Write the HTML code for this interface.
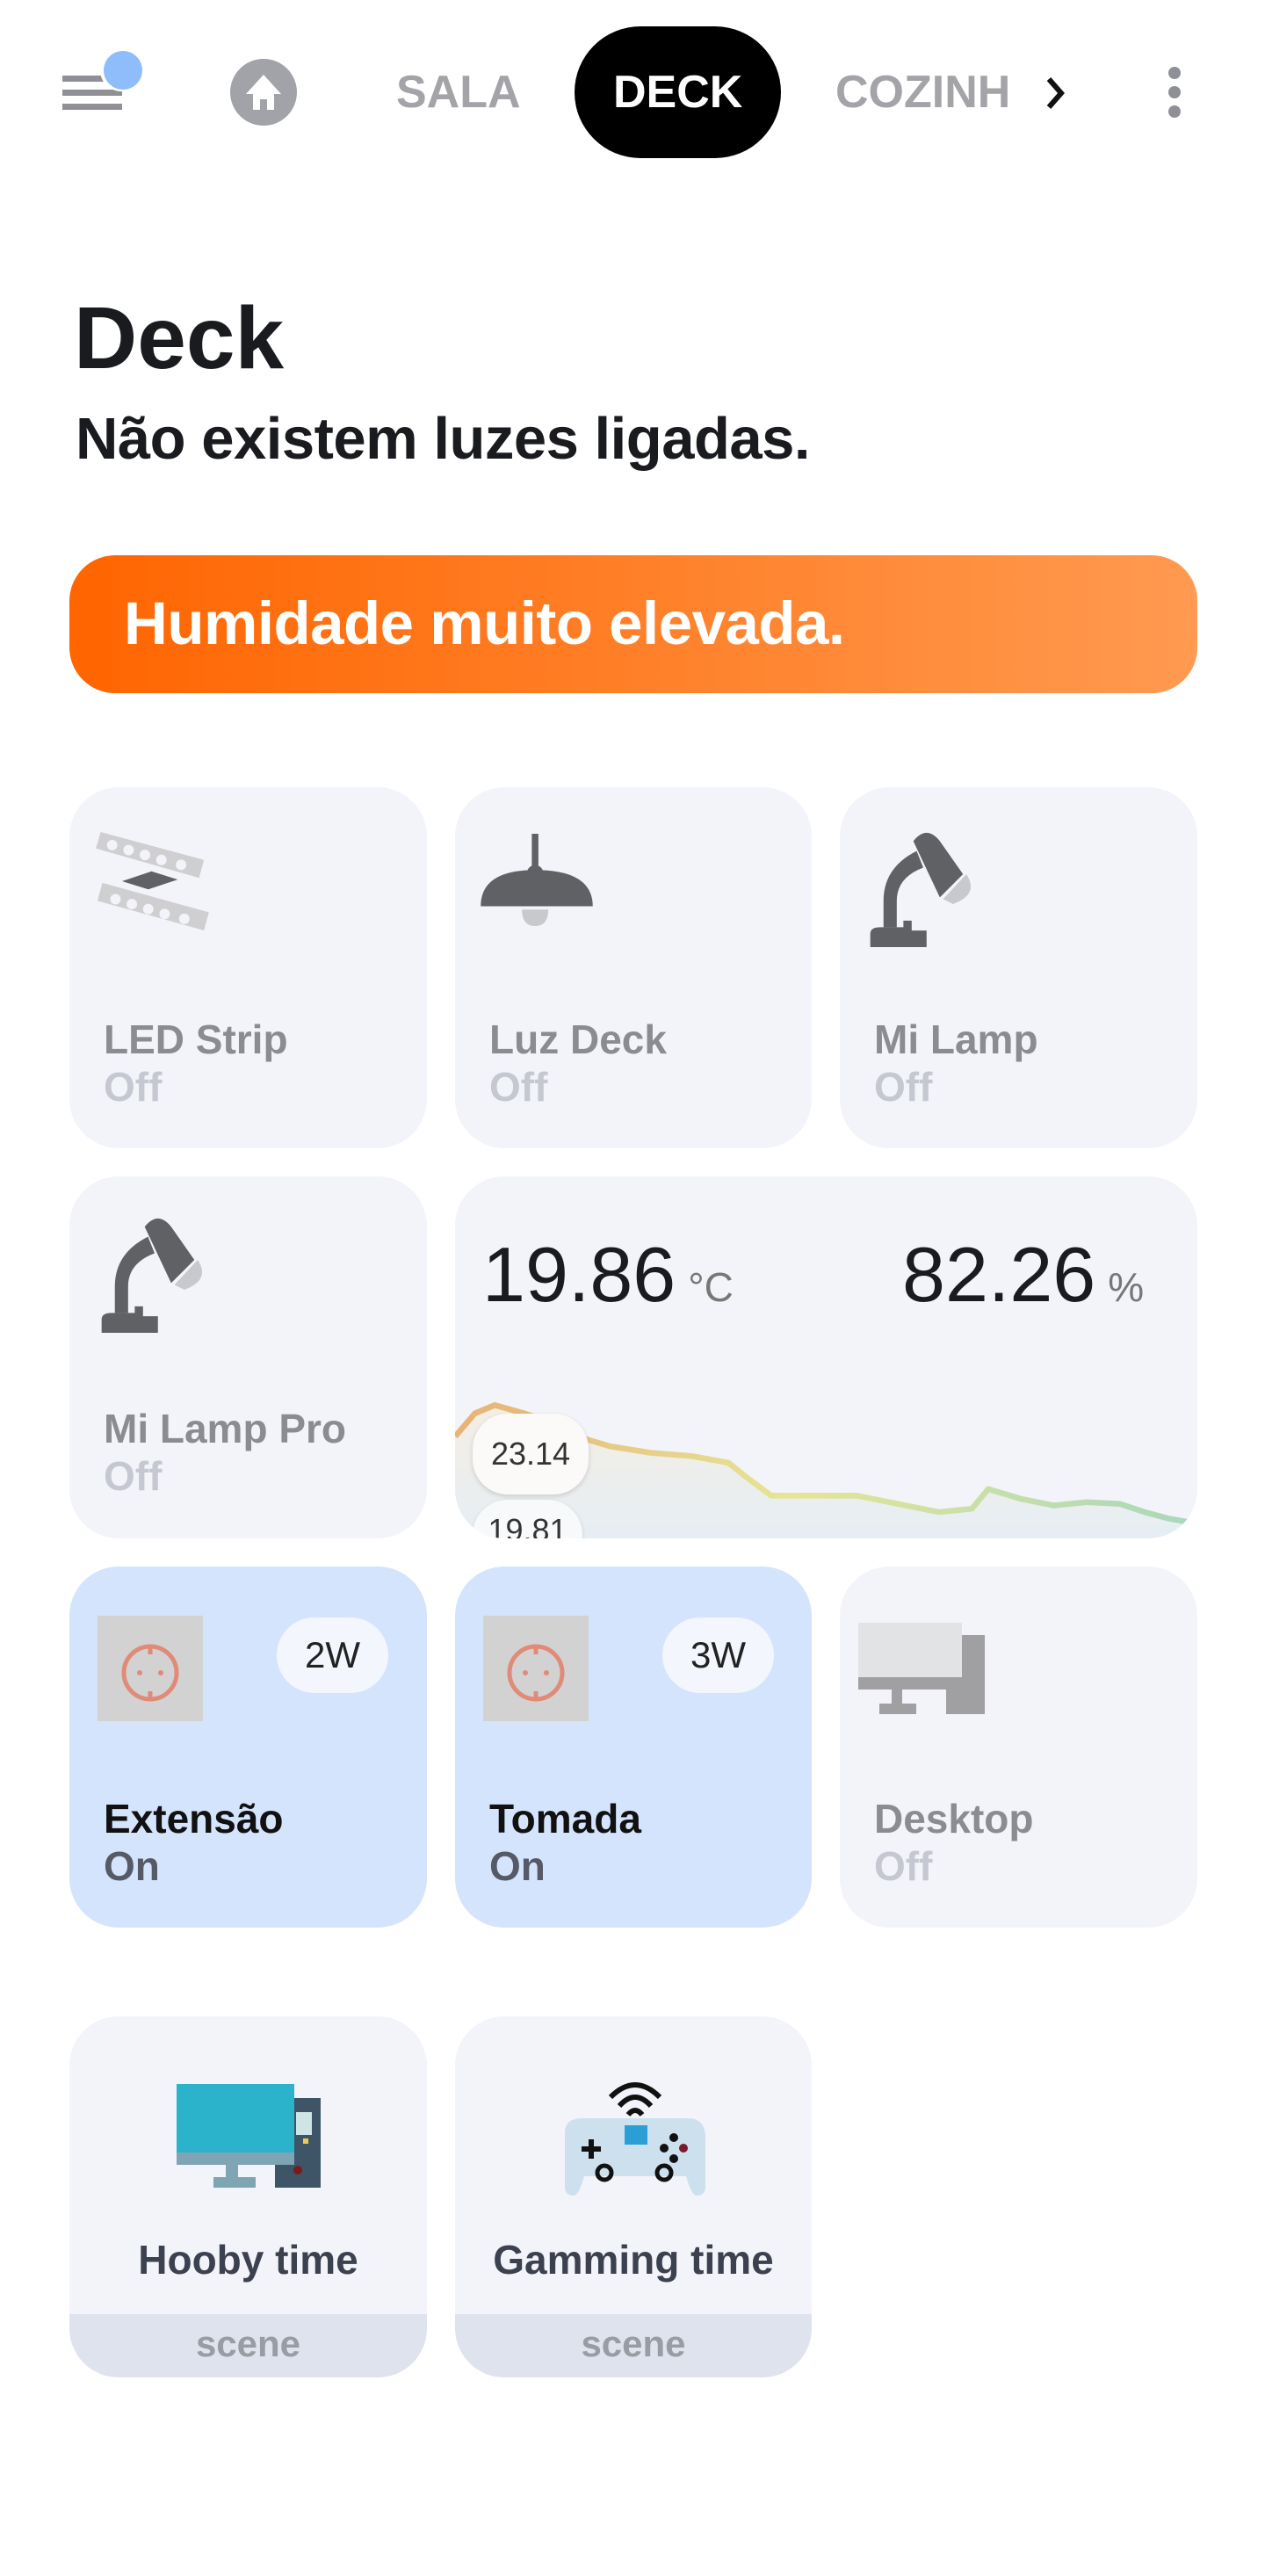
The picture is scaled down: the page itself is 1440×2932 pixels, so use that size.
<!DOCTYPE html>
<html><head><meta charset="utf-8">
<style>
*{margin:0;padding:0;box-sizing:border-box}
body{width:1440px;height:2932px;background:#fff;font-family:"Liberation Sans",sans-serif;position:relative;overflow:hidden}
.a{position:absolute}
.tab{position:absolute;top:74px;font-size:52px;font-weight:bold;color:#a3a3a8;line-height:62px}
.card{position:absolute;background:#f3f4f9;border-radius:56px;overflow:hidden}
.on{background:#d4e4fc}
.name{position:absolute;left:39px;top:260px;font-size:46px;font-weight:bold;color:#8a8c92;white-space:nowrap}
.st{position:absolute;left:39px;top:314px;font-size:46px;font-weight:bold;color:#c5c8d0}
.on .name{color:#111}
.on .st{color:#555a66}
.badge{position:absolute;left:236px;top:58px;width:127px;height:86px;border-radius:43px;background:#f3f6fc;font-size:42px;color:#222;text-align:center;line-height:86px}
.sock{position:absolute;left:32px;top:56px;width:120px;height:120px;background:#d2d2d2}
.sname{position:absolute;left:0;width:100%;top:250px;text-align:center;font-size:46px;font-weight:bold;color:#3c4150}
.sbar{position:absolute;left:0;width:100%;bottom:0;height:72px;background:#dfe3ee;text-align:center;font-size:42px;font-weight:bold;color:#9a9ca4;line-height:68px}
</style></head><body>

<div class="a" style="left:71px;top:86px;width:50px;height:7px;background:#8e9096"></div>
<div class="a" style="left:71px;top:102px;width:68px;height:7px;background:#8e9096"></div>
<div class="a" style="left:71px;top:118px;width:68px;height:7px;background:#8e9096"></div>
<div class="a" style="left:114px;top:56px;width:48px;height:48px;border-radius:50%;background:#fff"></div>
<div class="a" style="left:118px;top:58px;width:44px;height:44px;border-radius:50%;background:#8fbcfb"></div>
<svg class="a" style="left:262px;top:67px" width="76" height="76" viewBox="0 0 76 76"><circle cx="38" cy="38" r="38" fill="#a2a3a8"/><path d="M38 18 L58 40 H50 V58 H42 V46 H34 V58 H26 V40 H18 Z" fill="#fff"/></svg>
<div class="tab" style="left:451px">SALA</div>
<div class="a" style="left:654px;top:30px;width:235px;height:150px;border-radius:75px;background:#000"></div>
<div class="tab" style="left:698px;color:#fff">DECK</div>
<div class="tab" style="left:951px">COZINH</div>
<svg class="a" style="left:1188px;top:86px" width="28" height="40" viewBox="0 0 28 40"><path d="M6 4 L20 20 L6 36" stroke="#111" stroke-width="6" fill="none"/></svg>
<div class="a" style="left:1330px;top:76px;width:14px;height:14px;border-radius:50%;background:#8e9096"></div>
<div class="a" style="left:1330px;top:98px;width:14px;height:14px;border-radius:50%;background:#8e9096"></div>
<div class="a" style="left:1330px;top:120px;width:14px;height:14px;border-radius:50%;background:#8e9096"></div>

<div class="a" style="left:84px;top:330px;font-size:100px;font-weight:bold;color:#1a1b1f;line-height:110px">Deck</div>
<div class="a" style="left:86px;top:462px;font-size:67px;font-weight:bold;color:#1a1b1f;line-height:76px;letter-spacing:-0.5px">Não existem luzes ligadas.</div>

<div class="a" style="left:79px;top:632px;width:1284px;height:157px;border-radius:52px;background:linear-gradient(90deg,#ff6500,#ff9a50)"></div>
<div class="a" style="left:141px;top:670px;font-size:69px;font-weight:bold;color:#fff;line-height:80px;letter-spacing:-0.5px">Humidade muito elevada.</div>

<div class="card" style="left:79px;top:896px;width:407px;height:411px">
 <svg class="a" style="left:26px;top:51px" width="135" height="125" viewBox="0 0 72 67"><g fill="#cfcfd1"><path d="M2 10 L5 0 L68 17 L65 28 Z"/><path d="M3 42 L6 31 L71 49 L68 60 Z"/></g><g fill="#f3f4f9"><circle cx="12" cy="8" r="3.2"/><circle cx="22" cy="11" r="3.2"/><circle cx="32" cy="14" r="3.2"/><circle cx="42" cy="17" r="3.2"/><circle cx="54" cy="20" r="3.2"/><circle cx="14" cy="41" r="3.2"/><circle cx="24" cy="44" r="3.2"/><circle cx="34" cy="47" r="3.2"/><circle cx="44" cy="50" r="3.2"/><circle cx="56" cy="53" r="3.2"/></g><path d="M18 30 L36 24 L52 29 L34 35 Z" fill="#5f6165"/></svg>
 <div class="name">LED Strip</div><div class="st">Off</div></div>
<div class="card" style="left:518px;top:896px;width:406px;height:411px">
 <svg class="a" style="left:29px;top:53px" width="128" height="120" viewBox="0 0 68 64"><rect x="31" y="0" width="4" height="22" fill="#5f6165"/><circle cx="33" cy="24" r="5" fill="#5f6165"/><path d="M0 44 Q0 22 33 22 Q68 22 68 44 Z" fill="#5f6165"/><path d="M25 46 H41 Q41 56 33 56 Q25 56 25 46Z" fill="#c8c9cc"/></svg>
 <div class="name">Luz Deck</div><div class="st">Off</div></div>
<div class="card" style="left:956px;top:896px;width:407px;height:411px">
 <svg class="a" style="left:30px;top:50px" width="130" height="132" viewBox="0 0 68 70"><path d="M28 6 Q36 -4 44 6 L58 26 L44 40 Z" fill="#5f6165"/><path d="M60 26 Q68 38 52 44 L46 41Z" fill="#c8c9cc"/><path d="M30 12 Q10 22 10 42 L10 58 L18 58 L18 42 Q18 28 34 22 Z" fill="#5f6165"/><path d="M2 70 L2 62 Q2 58 8 58 L22 58 L22 54 L27 54 L27 60 L36 60 L36 70 Z" fill="#5f6165"/></svg>
 <div class="name">Mi Lamp</div><div class="st">Off</div></div>

<div class="card" style="left:79px;top:1339px;width:407px;height:412px">
 <svg class="a" style="left:32px;top:46px" width="130" height="132" viewBox="0 0 68 70"><path d="M28 6 Q36 -4 44 6 L58 26 L44 40 Z" fill="#5f6165"/><path d="M60 26 Q68 38 52 44 L46 41Z" fill="#c8c9cc"/><path d="M30 12 Q10 22 10 42 L10 58 L18 58 L18 42 Q18 28 34 22 Z" fill="#5f6165"/><path d="M2 70 L2 62 Q2 58 8 58 L22 58 L22 54 L27 54 L27 60 L36 60 L36 70 Z" fill="#5f6165"/></svg>
 <div class="name">Mi Lamp Pro</div><div class="st">Off</div></div>
<div class="card" style="left:518px;top:1339px;width:845px;height:412px">
 <div class="a" style="left:31px;top:62px;font-size:88px;color:#1a1b1f;line-height:100px;white-space:nowrap">19.86<span style="font-size:46px;color:#777;margin-left:14px">°C</span></div>
 <div class="a" style="left:509px;top:62px;font-size:88px;color:#1a1b1f;line-height:100px;white-space:nowrap">82.26<span style="font-size:46px;color:#777;margin-left:14px">%</span></div>
 <svg class="a" style="left:0;top:0" width="845" height="412" viewBox="276 714 451 220">
  <defs><linearGradient id="g" x1="0" x2="1"><stop offset="0" stop-color="#e8b274"/><stop offset="0.45" stop-color="#e6e596"/><stop offset="1" stop-color="#a8d8bc"/></linearGradient>
  <linearGradient id="f" x1="0" x2="0" y1="0" y2="1"><stop offset="0" stop-color="#f4eee4"/><stop offset="1" stop-color="#e6eef4"/></linearGradient></defs>
  <path d="M276 872 L288 858 L300 853 L318 858 L330 862 L350 872 L370 878 L395 882 L420 884 L442 888 L452 896 L468 908 L490 908 L520 908 L550 914 L570 918 L590 916 L600 904 L620 910 L640 914 L660 912 L680 913 L695 918 L710 922 L727 925 L727 934 L276 934 Z" fill="url(#f)"/>
  <path d="M276 872 L288 858 L300 853 L318 858 L330 862 L350 872 L370 878 L395 882 L420 884 L442 888 L452 896 L468 908 L490 908 L520 908 L550 914 L570 918 L590 916 L600 904 L620 910 L640 914 L660 912 L680 913 L695 918 L710 922 L727 925" fill="none" stroke="url(#g)" stroke-width="3.5" stroke-linejoin="round"/>
 </svg>
 <div class="a" style="left:20px;top:270px;width:132px;height:92px;border-radius:40px;background:#fbfaf8;box-shadow:0 2px 6px rgba(0,0,0,.15);font-size:36px;color:#333;text-align:center;line-height:92px">23.14</div>
 <div class="a" style="left:20px;top:368px;width:125px;height:92px;border-radius:40px;background:#f8f9fb;box-shadow:0 2px 6px rgba(0,0,0,.12);font-size:36px;color:#333;text-align:center;line-height:70px">19.81</div>
</div>

<div class="card on" style="left:79px;top:1783px;width:407px;height:411px">
 <div class="sock"></div>
 <svg class="a" style="left:57px;top:86px" width="70" height="70" viewBox="0 0 70 70"><circle cx="35" cy="35" r="30" fill="none" stroke="#e08b78" stroke-width="5"/><path d="M35 5 V14 M35 56 V65" stroke="#e08b78" stroke-width="5"/><circle cx="23" cy="35" r="3" fill="#e08b78"/><circle cx="47" cy="35" r="3" fill="#e08b78"/></svg>
 <div class="badge">2W</div>
 <div class="name">Extensão</div><div class="st">On</div></div>
<div class="card on" style="left:518px;top:1783px;width:406px;height:411px">
 <div class="sock"></div>
 <svg class="a" style="left:57px;top:86px" width="70" height="70" viewBox="0 0 70 70"><circle cx="35" cy="35" r="30" fill="none" stroke="#e08b78" stroke-width="5"/><path d="M35 5 V14 M35 56 V65" stroke="#e08b78" stroke-width="5"/><circle cx="23" cy="35" r="3" fill="#e08b78"/><circle cx="47" cy="35" r="3" fill="#e08b78"/></svg>
 <div class="badge">3W</div>
 <div class="name">Tomada</div><div class="st">On</div></div>
<div class="card" style="left:956px;top:1783px;width:407px;height:411px">
 <svg class="a" style="left:21px;top:64px" width="144" height="104" viewBox="0 0 144 104"><rect x="100" y="14" width="44" height="90" fill="#a0a0a2"/><rect x="0" y="0" width="118" height="74" fill="#e2e3e5"/><rect x="0" y="62" width="118" height="14" fill="#a0a0a2"/><rect x="38" y="76" width="12" height="20" fill="#a0a0a2"/><rect x="24" y="92" width="42" height="12" fill="#a0a0a2"/></svg>
 <div class="name">Desktop</div><div class="st">Off</div></div>

<div class="card" style="left:79px;top:2295px;width:407px;height:411px">
 <svg class="a" style="left:122px;top:77px" width="164" height="118" viewBox="0 0 164 118"><rect x="112" y="16" width="52" height="102" fill="#3d5566"/><rect x="136" y="32" width="18" height="26" fill="#cfe4e4"/><rect x="144" y="62" width="6" height="6" fill="#f2c94c"/><circle cx="138" cy="98" r="5" fill="#7a1a1a"/><rect x="0" y="0" width="134" height="80" fill="#2bb3cc"/><rect x="0" y="78" width="134" height="14" fill="#7fa4b4"/><rect x="56" y="92" width="14" height="16" fill="#7fa4b4"/><rect x="42" y="106" width="48" height="12" fill="#7fa4b4"/></svg>
 <div class="sname">Hooby time</div><div class="sbar">scene</div></div>
<div class="card" style="left:518px;top:2295px;width:406px;height:411px">
 <svg class="a" style="left:125px;top:62px" width="160" height="144" viewBox="0 0 160 144"><path d="M52 30 Q80 2 108 30 M62 40 Q80 20 98 40 M72 50 Q80 40 88 50" stroke="#111" stroke-width="6" fill="none"/><path d="M0 70 Q0 54 20 54 L140 54 Q160 54 160 76 L160 132 Q160 142 150 142 Q144 142 138 120 L22 120 Q16 142 10 142 Q0 142 0 132 Z" fill="#cde0ee"/><rect x="68" y="62" width="26" height="22" fill="#2a9fd6"/><path d="M30 78 V100 M19 89 H41" stroke="#111" stroke-width="6"/><circle cx="124" cy="76" r="5" fill="#111"/><circle cx="124" cy="100" r="5" fill="#111"/><circle cx="113" cy="88" r="5" fill="#111"/><circle cx="135" cy="88" r="5" fill="#7a1a2a"/><circle cx="45" cy="116" r="8" fill="none" stroke="#111" stroke-width="5"/><circle cx="113" cy="116" r="8" fill="none" stroke="#111" stroke-width="5"/></svg>
 <div class="sname">Gamming time</div><div class="sbar">scene</div></div>

</body></html>
